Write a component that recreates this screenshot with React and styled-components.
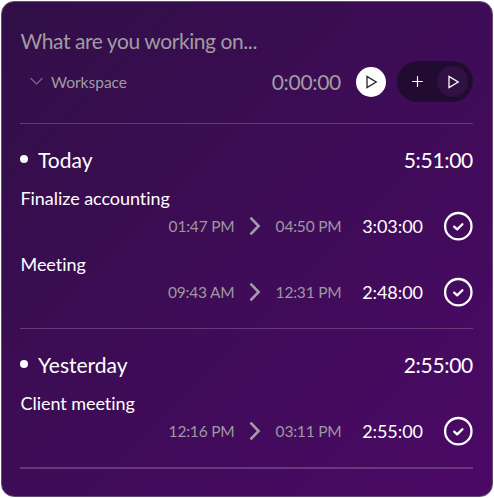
import React from 'react';
import styled, { createGlobalStyle } from 'styled-components';

const Global = createGlobalStyle`
  * { box-sizing: border-box; }
  body {
    margin: 0;
    background: #fff;
    font-family: Lato, sans-serif;
    font-variant-ligatures: none;
  }
`;

const Card = styled.main`
  width: 492px;
  height: 496px;
  margin: 1px;
  padding: 25px 19px 0 18px;
  border: 1px solid #6b4a80;
  border-radius: 13px;
  background: linear-gradient(135deg, #310f47, #4b0966);
  color: #fff;
`;

const Prompt = styled.div`
  height: 28px;
  padding-left: 0.5px;
  line-height: 28px;
  font-size: 21px;
  letter-spacing: -0.42px;
  color: #a09ca2;
`;

const Controls = styled.div`
  display: flex;
  align-items: center;
  height: 41px;
  margin-top: 6px;
`;

const Workspace = styled.div`
  display: flex;
  align-items: center;
  flex: 1;
  gap: 8px;
  padding: 0 0 0 10px;
  font-size: 15.5px;
  color: #a09ca2;
`;

const Timer = styled.div`
  margin: 0 15px 0 0;
  font-size: 21px;
  letter-spacing: -0.3px;
  color: #a09ca2;
`;

const Round = styled.button`
  display: flex;
  align-items: center;
  justify-content: center;
  width: ${(p) => p.$size}px;
  height: ${(p) => p.$size}px;
  padding: 0;
  border: 0;
  border-radius: 50%;
  background: ${(p) => p.$bg};
  color: ${(p) => p.$color};
`;

const Pill = styled.div`
  display: flex;
  align-items: center;
  justify-content: space-between;
  width: 76px;
  height: 41px;
  margin-left: 11px;
  padding: 0 5px;
  border-radius: 21px;
  background: #220b30;
`;

const Divider = styled.div`
  height: ${(p) => p.$weight || 1}px;
  margin-top: ${(p) => p.$top}px;
  background: #66397b;
`;

const DayHeader = styled.div`
  display: flex;
  align-items: center;
  height: 28px;
  margin-top: 21px;
  font-size: 21px;
`;

const Dot = styled.span`
  width: 8px;
  height: 8px;
  margin-right: 10px;
  border-radius: 50%;
  background: #fff;
`;

const DayName = styled.span`
  flex: 1;
`;

const DayTotal = styled.span`
  letter-spacing: -0.3px;
`;

const Entry = styled.section`
  height: 66px;
  padding-top: 12px;
`;

const EntryName = styled.div`
  height: 26px;
  padding-left: 0.5px;
  line-height: 26px;
  font-size: 18px;
  letter-spacing: -0.05px;
`;

const EntryTimes = styled.div`
  display: grid;
  grid-template-columns: 214.5px 40px 67px 81.5px 1fr;
  align-items: center;
  height: 30px;
  text-align: right;
`;

const Clock = styled.span`
  font-size: 15.5px;
  letter-spacing: -0.2px;
  white-space: nowrap;
  color: #9e98a1;
`;

const Duration = styled.span`
  font-size: 18px;
  letter-spacing: -0.05px;
`;

const Icon = styled.svg`
  display: block;
  flex: none;
  fill: none;
  stroke: currentColor;
  stroke-linecap: ${(p) => p.$cap || 'round'};
  stroke-linejoin: ${(p) => p.$join || 'round'};
`;

const Arrow = styled(Icon)`
  justify-self: center;
  color: #a39ba7;
`;

const Check = styled(Icon)`
  justify-self: end;
`;

const Play = () => (
  <Icon width="14" height="16" viewBox="0 0 14 16" strokeWidth="1.3" $join="miter">
    <path d="M3 2.4v11.2L12.2 8z" />
  </Icon>
);

const days = [
  {
    name: 'Today',
    total: '5:51:00',
    entries: [
      { name: 'Finalize accounting', from: '01:47 PM', to: '04:50 PM', time: '3:03:00' },
      { name: 'Meeting', from: '09:43 AM', to: '12:31 PM', time: '2:48:00' },
    ],
  },
  {
    name: 'Yesterday',
    total: '2:55:00',
    entries: [{ name: 'Client meeting', from: '12:16 PM', to: '03:11 PM', time: '2:55:00' }],
  },
];

export default function App() {
  return (
    <>
      <Global />
      <Card>
        <Prompt>What are you working on...</Prompt>
        <Controls>
          <Workspace>
            <Icon width="13" height="9" viewBox="0 0 13 9" strokeWidth="1.3" color="#78628a">
              <path d="M1 1.5l5.5 5.5L12 1.5" />
            </Icon>
            Workspace
          </Workspace>
          <Timer>0:00:00</Timer>
          <Round $size={30} $bg="#fff" $color="#222"><Play /></Round>
          <Pill>
            <Round $size={31} $bg="transparent" $color="#fff">
              <Icon width="11" height="11" viewBox="0 0 11 11" strokeWidth="1.2">
                <path d="M5.5 .6v9.8M.6 5.5h9.8" />
              </Icon>
            </Round>
            <Round $size={31} $bg="#311044" $color="#fff"><Play /></Round>
          </Pill>
        </Controls>
        <Divider $top={21} />
        {days.map((day, i) => (
          <React.Fragment key={day.name}>
            <DayHeader>
              <Dot />
              <DayName>{day.name}</DayName>
              <DayTotal>{day.total}</DayTotal>
            </DayHeader>
            {day.entries.map((e) => (
              <Entry key={e.name}>
                <EntryName>{e.name}</EntryName>
                <EntryTimes>
                  <Clock>{e.from}</Clock>
                  <Arrow width="12" height="20" viewBox="0 0 12 20" strokeWidth="2.6" $cap="butt" $join="miter">
                    <path d="M1.5 1.6L9.6 10l-8.1 8.4" />
                  </Arrow>
                  <Clock>{e.to}</Clock>
                  <Duration>{e.time}</Duration>
                  <Check width="30" height="30" viewBox="0 0 30 30">
                    <circle cx="15.3" cy="15.2" r="13.2" strokeWidth="2.3" />
                    <path d="M11.2 15.6l3 2.8 5.2-5.2" strokeWidth="2.3" />
                  </Check>
                </EntryTimes>
              </Entry>
            ))}
            <Divider $top={23} $weight={i === days.length - 1 ? 2 : 1} />
          </React.Fragment>
        ))}
      </Card>
    </>
  );
}
